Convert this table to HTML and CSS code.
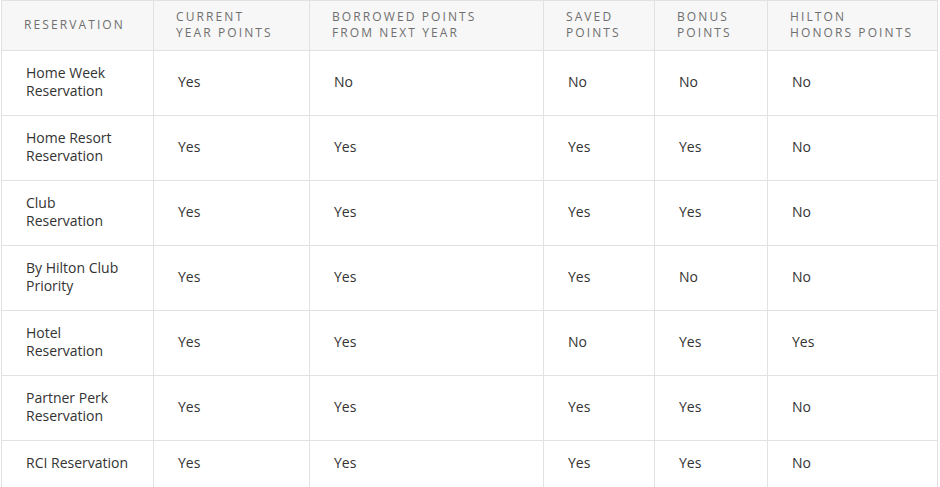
FILE: index.html
```html
<!DOCTYPE html>
<html lang="en">
<head>
<meta charset="utf-8">
<title>Reservation points</title>
<link rel="stylesheet" href="styles.css">
</head>
<body>
<table class="points-table">
  <colgroup>
    <col class="c1"><col class="c2"><col class="c3"><col class="c4"><col class="c5"><col class="c6">
  </colgroup>
  <thead>
    <tr>
      <th>Reservation</th>
      <th>Current<br>Year Points</th>
      <th>Borrowed Points<br>From Next Year</th>
      <th>Saved<br>Points</th>
      <th>Bonus<br>Points</th>
      <th>Hilton<br>Honors Points</th>
    </tr>
  </thead>
  <tbody>
    <tr><td>Home Week<br>Reservation</td><td>Yes</td><td>No</td><td>No</td><td>No</td><td>No</td></tr>
    <tr><td>Home Resort<br>Reservation</td><td>Yes</td><td>Yes</td><td>Yes</td><td>Yes</td><td>No</td></tr>
    <tr><td>Club<br>Reservation</td><td>Yes</td><td>Yes</td><td>Yes</td><td>Yes</td><td>No</td></tr>
    <tr><td>By Hilton Club<br>Priority</td><td>Yes</td><td>Yes</td><td>Yes</td><td>No</td><td>No</td></tr>
    <tr><td>Hotel<br>Reservation</td><td>Yes</td><td>Yes</td><td>No</td><td>Yes</td><td>Yes</td></tr>
    <tr><td>Partner Perk<br>Reservation</td><td>Yes</td><td>Yes</td><td>Yes</td><td>Yes</td><td>No</td></tr>
    <tr><td>RCI Reservation</td><td>Yes</td><td>Yes</td><td>Yes</td><td>Yes</td><td>No</td></tr>
  </tbody>
</table>
</body>
</html>
```
FILE: styles.css
```css
html, body {
  margin: 0;
  padding: 0;
  background: #ffffff;
}
body {
  font-family: "Open Sans", "Noto Sans", sans-serif;
  color: #333333;
}
.points-table {
  margin-left: 1px;
  width: 936px;
  table-layout: fixed;
  border-collapse: collapse;
}
.c1 { width: 152px; }
.c2 { width: 156px; }
.c3 { width: 234px; }
.c4 { width: 111px; }
.c5 { width: 113px; }
.c6 { width: 170px; }
.points-table th,
.points-table td {
  border: 1px solid #e2e2e2;
  text-align: left;
  vertical-align: middle;
}
.points-table th {
  background: #f7f7f7;
  font-weight: normal;
  font-size: 12px;
  line-height: 16px;
  letter-spacing: 2.1px;
  text-transform: uppercase;
  color: #6f6f6f;
  padding: 8px 10px 9px 22px;
}
.points-table td {
  font-size: 14px;
  line-height: 18px;
  padding: 13px 10px 15px 24px;
}
```
